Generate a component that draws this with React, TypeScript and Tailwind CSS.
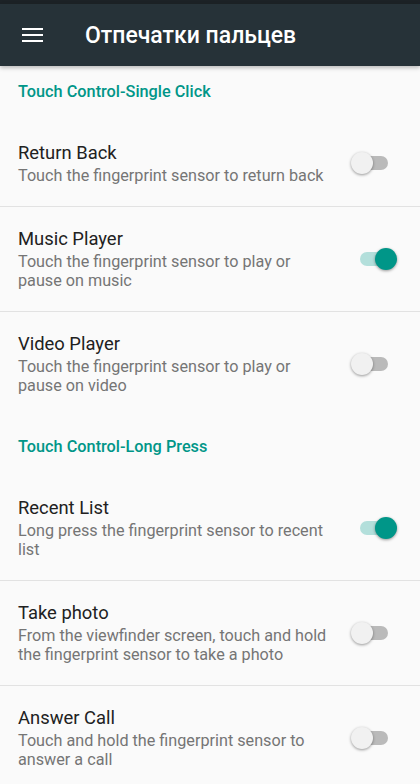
import React, { useState } from "react";

type Item = { title: string; desc: string; on: boolean };

const sections: { name: string; items: Item[] }[] = [
  {
    name: "Touch Control-Single Click",
    items: [
      { title: "Return Back", desc: "Touch the fingerprint sensor to return back", on: false },
      { title: "Music Player", desc: "Touch the fingerprint sensor to play or pause on music", on: true },
      { title: "Video Player", desc: "Touch the fingerprint sensor to play or pause on video", on: false },
    ],
  },
  {
    name: "Touch Control-Long Press",
    items: [
      { title: "Recent List", desc: "Long press the fingerprint sensor to recent list", on: true },
      { title: "Take photo", desc: "From the viewfinder screen, touch and hold the fingerprint sensor to take a photo", on: false },
      { title: "Answer Call", desc: "Touch and hold the fingerprint sensor to answer a call", on: false },
    ],
  },
];

function Toggle({ on, onClick }: { on: boolean; onClick: () => void }) {
  return (
    <button onClick={onClick} className="relative w-[48px] h-[24px] shrink-0">
      <span
        className={
          on
            ? "absolute top-[5px] left-[10px] w-[36px] h-[14px] rounded-full bg-[#b3dfdb]"
            : "absolute top-[5px] left-[2px] w-[36px] h-[14px] rounded-full bg-[#bababa]"
        }
      />
      <span
        className={
          on
            ? "absolute top-[1px] left-[25px] w-[22px] h-[22px] rounded-full bg-[#009688] shadow-[0_1px_3px_rgba(0,0,0,0.4)]"
            : "absolute top-[1px] left-[1px] w-[22px] h-[22px] rounded-full bg-[#f1f1f1] shadow-[0_1px_3px_rgba(0,0,0,0.4)]"
        }
      />
    </button>
  );
}

export default function App() {
  const [state, setState] = useState(sections.map((s) => s.items.map((i) => i.on)));

  const flip = (si: number, ii: number) =>
    setState((prev) => prev.map((row, a) => row.map((v, b) => (a === si && b === ii ? !v : v))));

  return (
    <div className="w-[420px] h-[784px] overflow-hidden bg-[#fafafa] font-['Roboto',sans-serif]">
      <div className="h-[4px] bg-[#1c2226]" />
      <header className="h-[62px] bg-[#263238] flex items-center shadow-[0_2px_4px_rgba(0,0,0,0.25)] relative z-10">
        <div className="w-[85px] pl-[22px] flex flex-col gap-[3.5px]">
          <span className="block w-[21px] h-[2.5px] bg-white" />
          <span className="block w-[21px] h-[2.5px] bg-white" />
          <span className="block w-[21px] h-[2.5px] bg-white" />
        </div>
        <h1 className="text-white text-[23px] font-medium leading-none">Отпечатки пальцев</h1>
      </header>

      {sections.map((section, si) => (
        <div key={section.name}>
          <div
            className={
              si === 0
                ? "px-[18px] pt-[16px] pb-[19px] text-[16.3px] leading-[20px] font-medium text-[#009688]"
                : "px-[18px] pt-[21px] pb-[19px] text-[16.3px] leading-[20px] font-medium text-[#009688]"
            }
          >
            {section.name}
          </div>
          {section.items.map((item, ii) => (
            <div
              key={item.title}
              className={
                ii < section.items.length - 1
                  ? "flex items-center pl-[18px] pr-[22px] py-5 border-b border-[#e2e2e2]"
                  : "flex items-center pl-[18px] pr-[22px] py-5"
              }
            >
              <div className="w-[320px] shrink-0">
                <div className="text-[18.4px] leading-[24px] text-[#212121]">{item.title}</div>
                <div className="mt-[1px] text-[16.2px] leading-[19.5px] text-[#757575]">{item.desc}</div>
              </div>
              <div className="flex-1 flex justify-end">
                <Toggle on={state[si][ii]} onClick={() => flip(si, ii)} />
              </div>
            </div>
          ))}
        </div>
      ))}
    </div>
  );
}
